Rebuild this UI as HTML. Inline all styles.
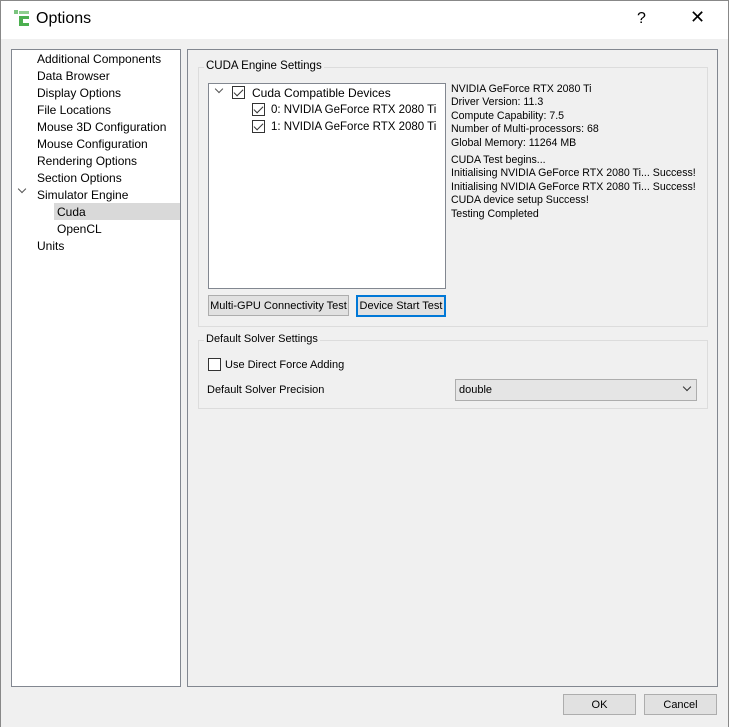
<!DOCTYPE html><html><head><style>
body{margin:0;width:729px;height:727px;background:#f0f0f0;font-family:"Liberation Sans",sans-serif;font-size:12px;color:#000;position:relative;overflow:hidden}
.a{position:absolute}
.tb{left:0;top:0;width:727px;height:38px;background:#fff;border:1px solid #888;border-bottom:none}
.w{background:#fff;border:1px solid #828790}
.grp{border:1px solid #dcdcdc}
.gt{background:#f0f0f0;padding:0 2px;font-size:11.5px}
.btn{background:#e1e1e1;border:1px solid #adadad;text-align:center;line-height:19px}
.cb{width:11px;height:11px;border:1px solid #333;background:#fff}
.cb:after{content:"";position:absolute;left:3px;top:0px;width:4px;height:8px;border:solid #333;border-width:0 1px 1px 0;transform:rotate(45deg)}
.l{line-height:17px}
</style></head><body>
<div class="a tb"></div>
<div class="a" style="left:0;top:38px;width:1px;height:689px;background:#888"></div>
<div class="a" style="left:728px;top:38px;width:1px;height:689px;background:#888"></div>
<div class="a" style="left:14px;top:10px;width:4px;height:4px;background:#7bc47f"></div>
<div class="a" style="left:19px;top:11px;width:10px;height:3px;background:#8fcf8f"></div>
<div class="a" style="left:19px;top:16px;width:4px;height:10px;background:#4caf50"></div>
<div class="a" style="left:19px;top:16px;width:10px;height:3px;background:#4caf50"></div>
<div class="a" style="left:19px;top:23px;width:10px;height:3px;background:#4caf50"></div>
<div class="a" style="left:36px;top:10px;font-size:16px">Options</div>
<div class="a" style="left:637px;top:10px;font-size:16px">?</div>
<div class="a" style="left:690px;top:7px;font-size:18px">✕</div>

<div class="a w" style="left:11px;top:49px;width:168px;height:636px"></div>
<div class="a l" style="left:37px;top:51px">Additional Components<br>Data Browser<br>Display Options<br>File Locations<br>Mouse 3D Configuration<br>Mouse Configuration<br>Rendering Options<br>Section Options<br>Simulator Engine</div>
<div class="a" style="left:54px;top:203px;width:126px;height:17px;background:#d9d9d9"></div>
<div class="a l" style="left:57px;top:204px">Cuda<br>OpenCL</div>
<div class="a l" style="left:37px;top:238px">Units</div>
<div class="a" style="left:19px;top:186px;width:5px;height:5px;border:solid #555;border-width:0 1px 1px 0;transform:rotate(45deg)"></div>

<div class="a" style="left:187px;top:49px;width:529px;height:636px;border:1px solid #828790"></div>
<div class="a grp" style="left:198px;top:67px;width:508px;height:258px"></div>
<div class="a gt" style="left:204px;top:60px">CUDA Engine Settings</div>
<div class="a w" style="left:208px;top:83px;width:236px;height:204px"></div>
<div class="a" style="left:216px;top:86px;width:5px;height:5px;border:solid #555;border-width:0 1px 1px 0;transform:rotate(45deg)"></div>
<div class="a cb" style="left:232px;top:86px"></div>
<div class="a l" style="left:252px;top:85px">Cuda Compatible Devices</div>
<div class="a cb" style="left:252px;top:103px"></div>
<div class="a l" style="left:271px;top:102px;font-size:11.5px">0: NVIDIA GeForce RTX 2080 Ti</div>
<div class="a cb" style="left:252px;top:120px"></div>
<div class="a l" style="left:271px;top:119px;font-size:11.5px">1: NVIDIA GeForce RTX 2080 Ti</div>
<div class="a" style="left:451px;top:83px;font-size:10.6px;line-height:13.4px">NVIDIA GeForce RTX 2080 Ti<br>Driver Version: 11.3<br>Compute Capability: 7.5<br>Number of Multi-processors: 68<br>Global Memory: 11264 MB</div>
<div class="a" style="left:451px;top:154px;font-size:10.6px;line-height:13.4px">CUDA Test begins...<br>Initialising NVIDIA GeForce RTX 2080 Ti... Success!<br>Initialising NVIDIA GeForce RTX 2080 Ti... Success!<br>CUDA device setup Success!<br>Testing Completed</div>
<div class="a btn" style="left:208px;top:295px;width:139px;height:19px;font-size:11px;line-height:20px">Multi-GPU Connectivity Test</div>
<div class="a btn" style="left:356px;top:295px;width:86px;height:18px;border:2px solid #0078d7;line-height:19px;font-size:11px">Device Start Test</div>

<div class="a grp" style="left:198px;top:340px;width:508px;height:67px"></div>
<div class="a gt" style="left:204px;top:333px;font-size:11px">Default Solver Settings</div>
<div class="a" style="left:208px;top:358px;width:11px;height:11px;border:1px solid #333;background:#fff"></div>
<div class="a l" style="left:225px;top:357px;font-size:11px">Use Direct Force Adding</div>
<div class="a l" style="left:207px;top:382px;font-size:11px">Default Solver Precision</div>
<div class="a" style="left:455px;top:379px;width:240px;height:20px;background:#e5e5e5;border:1px solid #adadad"></div>
<div class="a l" style="left:459px;top:382px;font-size:11px">double</div>
<div class="a" style="left:684px;top:384px;width:5px;height:5px;border:solid #333;border-width:0 1px 1px 0;transform:rotate(45deg)"></div>

<div class="a btn" style="left:563px;top:694px;width:71px;height:19px;font-size:11px;line-height:20px">OK</div>
<div class="a btn" style="left:644px;top:694px;width:71px;height:19px;font-size:11px;line-height:20px">Cancel</div>
</body></html>
